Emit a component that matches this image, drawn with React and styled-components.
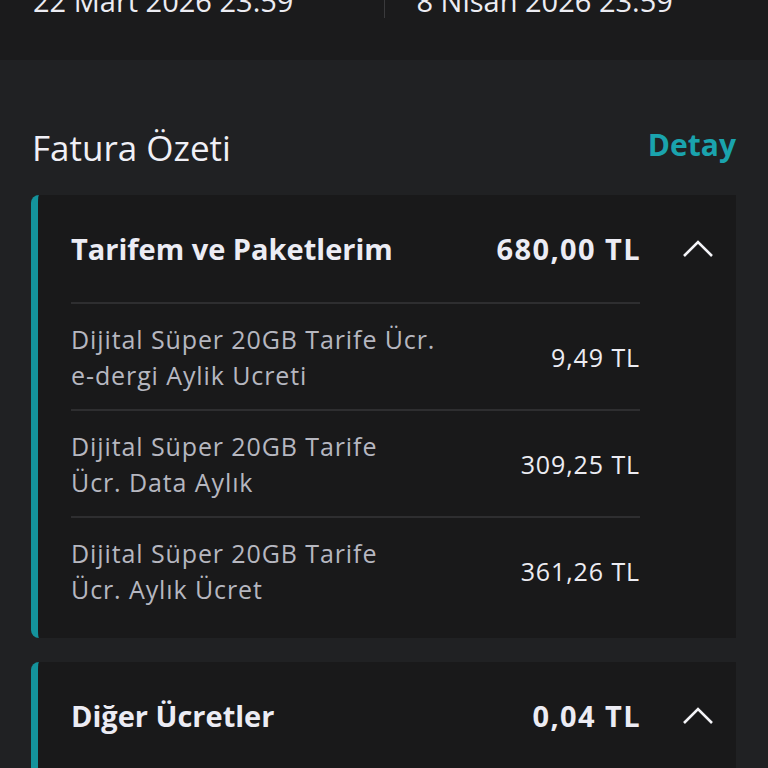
import React from 'react'
import styled, { createGlobalStyle } from 'styled-components'

const GlobalStyle = createGlobalStyle`
  html, body {
    margin: 0;
    padding: 0;
    background: #202123;
  }
  body {
    font-family: "Open Sans", Lato, sans-serif;
    color: #ececf2;
    overflow: hidden;
  }
  * {
    box-sizing: border-box;
  }
`

const Page = styled.div`
  width: 768px;
  height: 768px;
  overflow: hidden;
  background: #202123;
`

const DateBar = styled.div`
  display: grid;
  grid-template-columns: 1fr 1px 1fr;
  height: 80px;
  background: #1b1b1c;
  margin-top: -20px;
  padding: 0 33px;
`

const DateCell = styled.div`
  font-size: 29px;
  line-height: 34px;
  padding-top: 4px;
  color: #ececf2;
  white-space: nowrap;
  padding-left: ${p => (p.right ? '32px' : '0')};
`

const Divider = styled.div`
  width: 1px;
  height: 38px;
  background: #3a3a3c;
`

const Content = styled.div`
  padding: 0 32px 0 31px;
`

const SectionHead = styled.div`
  display: flex;
  justify-content: space-between;
  align-items: center;
  height: 60px;
  margin-top: 57px;
  margin-bottom: 18px;
  padding-left: 1px;
`

const SectionTitle = styled.h2`
  margin: 0;
  font-size: 35px;
  font-weight: 400;
  color: #f0f0f6;
`

const DetailLink = styled.a`
  font-size: 30px;
  font-weight: 700;
  color: #1aa3ad;
  text-decoration: none;
  margin-top: -6px;
`

const Card = styled.section`
  background: #19191a;
  border-left: 7px solid #14939c;
  border-radius: 8px 0 0 8px;
  padding: 0 0 15px 33px;
  margin-bottom: 24px;
`

const CardHeader = styled.div`
  display: flex;
  align-items: center;
  height: 107px;
  padding-right: 22px;
`

const CardTitle = styled.div`
  flex: 1;
  font-size: 29px;
  font-weight: 700;
  color: #ececf4;
`

const CardTotal = styled.div`
  font-size: 29px;
  font-weight: 700;
  letter-spacing: 1.4px;
  color: #ececf4;
  margin-right: 41px;
`

const Chevron = styled.svg`
  width: 32px;
  height: 20px;
  display: block;
`

const Rows = styled.div`
  margin-right: 96px;
`

const Row = styled.div`
  display: flex;
  align-items: center;
  justify-content: space-between;
  height: 107px;
  border-top: 2px solid #2e2e30;
`

const RowLabel = styled.div`
  font-size: 25px;
  line-height: 36px;
  letter-spacing: 0.9px;
  color: #b6b7c0;
`

const RowAmount = styled.div`
  font-size: 25px;
  letter-spacing: 0.9px;
  color: #ececf2;
`

const items = [
  { label: ['Dijital Süper 20GB Tarife Ücr.', 'e-dergi Aylik Ucreti'], amount: '9,49 TL' },
  { label: ['Dijital Süper 20GB Tarife', 'Ücr. Data Aylık'], amount: '309,25 TL' },
  { label: ['Dijital Süper 20GB Tarife', 'Ücr. Aylık Ücret'], amount: '361,26 TL' },
]

const UpIcon = () => (
  <Chevron viewBox="0 0 32 20">
    <path d="M2 17 L16 3 L30 17" fill="none" stroke="#f4f4f8" strokeWidth="2.6" />
  </Chevron>
)

export default function App() {
  return (
    <Page>
      <GlobalStyle />
      <DateBar>
        <DateCell>22 Mart 2026 23:59</DateCell>
        <Divider />
        <DateCell right>8 Nisan 2026 23:59</DateCell>
      </DateBar>
      <Content>
        <SectionHead>
          <SectionTitle>Fatura Özeti</SectionTitle>
          <DetailLink href="#">Detay</DetailLink>
        </SectionHead>
        <Card>
          <CardHeader>
            <CardTitle>Tarifem ve Paketlerim</CardTitle>
            <CardTotal>680,00 TL</CardTotal>
            <UpIcon />
          </CardHeader>
          <Rows>
            {items.map(item => (
              <Row key={item.amount}>
                <RowLabel>
                  {item.label[0]}
                  <br />
                  {item.label[1]}
                </RowLabel>
                <RowAmount>{item.amount}</RowAmount>
              </Row>
            ))}
          </Rows>
        </Card>
        <Card>
          <CardHeader>
            <CardTitle>Diğer Ücretler</CardTitle>
            <CardTotal>0,04 TL</CardTotal>
            <UpIcon />
          </CardHeader>
        </Card>
      </Content>
    </Page>
  )
}
